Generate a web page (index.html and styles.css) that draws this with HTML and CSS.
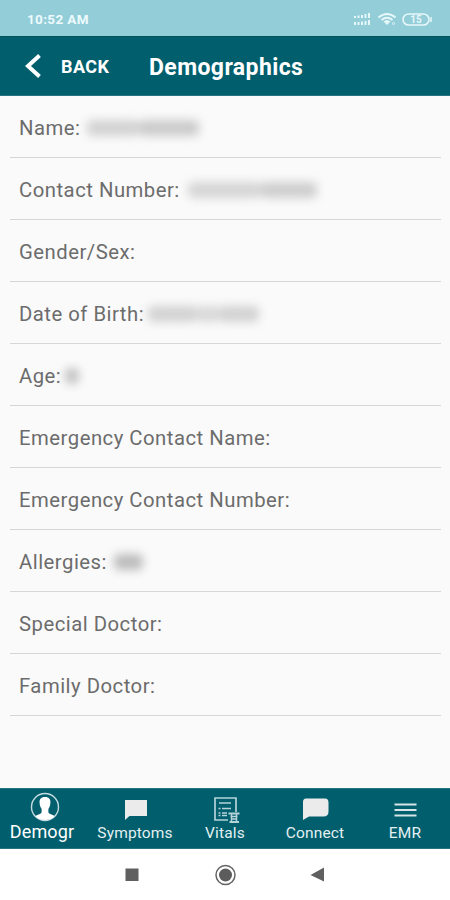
FILE: index.html
```html
<!DOCTYPE html>
<html lang="en">
<head>
<meta charset="utf-8">
<title>Demographics</title>
<link rel="stylesheet" href="styles.css">
</head>
<body>
<div class="status">
  <span class="time">10:52 AM</span>
  <svg class="status-icons" width="80" height="16" viewBox="0 0 80 16" fill="none" stroke="#e6f7fa">
    <g stroke-width="2"><path d="M3 5v2M6.500 4.500v2.500M10 4v3M13.500 3v4M17 2v5M3 11v3M6.500 11v3M10 10.500v3.500M13.500 10v4M17 9v5"/></g>
    <path stroke-width="1.900" d="M26.500 6.500q8.500-7 17 0M29.500 9q5.500-4.500 11 0"/>
    <path fill="#e6f7fa" stroke="none" d="M31.500 10.500q3.500-3 7 0L35 14z"/>
    <circle cx="41.500" cy="12.500" r="1" stroke-width="1"/>
    <rect x="51" y="3" width="26" height="11" rx="5.500" stroke-width="1.600"/>
    <path stroke-width="1.500" d="M79 6v5"/>
    <text x="64" y="12" class="charge">15</text>
  </svg>
</div>
<header class="bar">
  <svg class="chevron" width="18" height="26" viewBox="0 0 18 26"><path d="M16.500 2.500L5 13l11.500 10.500" fill="none" stroke="#fff" stroke-width="4"/></svg>
  <span class="back">BACK</span>
  <h1>Demographics</h1>
</header>
<main>
  <div class="row"><span>Name:</span><span class="redacted name"><i></i><i></i></span></div>
  <div class="row"><span>Contact Number:</span><span class="redacted phone"><i></i><i></i></span></div>
  <div class="row"><span>Gender/Sex:</span></div>
  <div class="row"><span>Date of Birth:</span><span class="redacted birth"><i></i><i></i><i></i></span></div>
  <div class="row"><span>Age:</span><span class="redacted age"><i></i></span></div>
  <div class="row"><span>Emergency Contact Name:</span></div>
  <div class="row"><span>Emergency Contact Number:</span></div>
  <div class="row"><span>Allergies:</span><span class="redacted allergy"><i></i></span></div>
  <div class="row"><span>Special Doctor:</span></div>
  <div class="row"><span>Family Doctor:</span></div>
</main>
<nav class="tabs">
  <div class="tab active">
    <svg width="30" height="30" viewBox="0 0 30 30"><circle cx="15" cy="15" r="13.500" fill="none" stroke="#c4dbe0" stroke-width="1.400"/><path fill="#fff" d="M15 5c-4.200 0-5.800 2.500-5.400 6 .2 3 1 4.500 2 6v3.500c-.8 1.500-3.500 2-6.400 3.500q3.500 4 9.800 4t9.800-4c-2.900-1.500-5.600-2-6.400-3.500V17c1-1.500 1.800-3 2-6 .4-3.500-1.200-6-5.400-6z"/></svg>
    <span>Demogr</span>
  </div>
  <div class="tab">
    <svg width="30" height="30" viewBox="0 0 30 30"><path fill="#ebebeb" d="M5 7h22v16H9.500L5 27z"/></svg>
    <span>Symptoms</span>
  </div>
  <div class="tab">
    <svg width="30" height="30" viewBox="0 0 30 30" fill="none" stroke="#b5d3d9"><path stroke-width="1.700" d="M18 27H5V5h21v14"/><path stroke-width="1.300" d="M9 10h12M8.500 15.500h2M12 15.500h9M8.500 20h2M12 20h5M8.500 22.500h2M12 22.500h5"/><path stroke-width="2" d="M18.500 20.500h11M19.500 29h9.500"/><path stroke-width="1.500" d="M20.500 23.500h7M21 26h6M21.500 20v9M26.500 20v9"/></svg>
    <span>Vitals</span>
  </div>
  <div class="tab">
    <svg width="30" height="30" viewBox="0 0 30 30"><path fill="#ebebeb" d="M6 5.500h19q3.500 0 3.500 4v9q0 5-5 5H9L3 27V9q0-3.500 3-3.500z"/></svg>
    <span>Connect</span>
  </div>
  <div class="tab">
    <svg width="30" height="30" viewBox="0 0 30 30"><path stroke="#d5e5e8" stroke-width="1.800" d="M4.500 11.500h22M4.500 17h22M4.500 22.500h22"/></svg>
    <span>EMR</span>
  </div>
</nav>
<footer class="system">
  <svg width="450" height="51" viewBox="0 0 450 51"><path fill="#606060" d="M125.500 19.500h13v12.500h-13zM324 18.500v14L310.500 26z"/><circle cx="225.500" cy="26" r="9.500" fill="none" stroke="#666" stroke-width="1.500"/><circle cx="225.500" cy="26" r="6.500" fill="#5c5c5c"/></svg>
</footer>
</body>
</html>
```
FILE: styles.css
```css
* { box-sizing: border-box; }
body {
  margin: 0;
  width: 450px;
  height: 900px;
  display: flex;
  flex-direction: column;
  background: #fafafa;
  font-family: Roboto, sans-serif;
  overflow: hidden;
}
svg { display: block; flex: none; }
.status {
  height: 36px;
  display: flex;
  align-items: center;
  justify-content: space-between;
  padding: 1px 18px 0 27px;
  background: #93cdd8;
}
.time { color: #edfbfd; font-size: 13.5px; font-weight: 700; letter-spacing: 0.35px; }
.charge { font-size: 10px; font-weight: 700; fill: #e6f7fa; stroke: none; text-anchor: middle; }
.bar {
  height: 60px;
  display: flex;
  align-items: center;
  padding-left: 23px;
  background: #005e6d;
  border-top: 1px solid #04505d;
  border-bottom: 1px solid #267482;
  color: #fff;
}
.back { margin-left: 20px; width: 88px; font-size: 18px; font-weight: 700; letter-spacing: 0.4px; }
h1 { margin: 2px 0 0; font-size: 23px; font-weight: 700; letter-spacing: 0.4px; }
main { flex: 1; padding: 0 9px 0 10px; }
.row {
  height: 62px;
  display: flex;
  align-items: center;
  padding: 2px 0 0 9px;
  border-bottom: 1px solid #d6d6d6;
  color: #6c6c6c;
  font-size: 20.3px;
  letter-spacing: 0.5px;
  white-space: nowrap;
}
.redacted { display: flex; height: 16px; filter: blur(5px); }
.redacted i { background: #d2d2d2; border-radius: 5px; }
.name { margin-left: 7px; }
.name i { width: 52px; }
.name i + i { width: 60px; background: #cbcbcb; }
.phone { margin-left: 8px; }
.phone i { width: 72px; background: #d5d5d5; }
.phone i + i { width: 57px; background: #cecece; }
.birth { margin-left: 4px; }
.birth i { width: 49px; }
.birth i:nth-child(2) { width: 22px; background: #d8d8d8; }
.birth i:nth-child(3) { width: 40px; }
.age { margin-left: 4px; }
.age i { width: 14px; background: #c2c2c2; }
.allergy { margin-left: 7px; }
.allergy i { width: 29px; background: #bcbcbc; }
.tabs {
  height: 61px;
  display: flex;
  background: #005e6d;
  border-top: 1px solid #267482;
  border-bottom: 1px solid #267482;
}
.tab {
  width: 90px;
  display: flex;
  flex-direction: column;
  align-items: center;
  padding-top: 4px;
  color: #e4f0f2;
  font-size: 15.5px;
  line-height: 20px;
}
.tab span { letter-spacing: 0.15px; }
.active { padding-right: 6px; color: #fff; font-size: 18px; }
.active svg { margin: -1px 0 0 6px; }
.system { height: 51px; background: #fff; }
```
